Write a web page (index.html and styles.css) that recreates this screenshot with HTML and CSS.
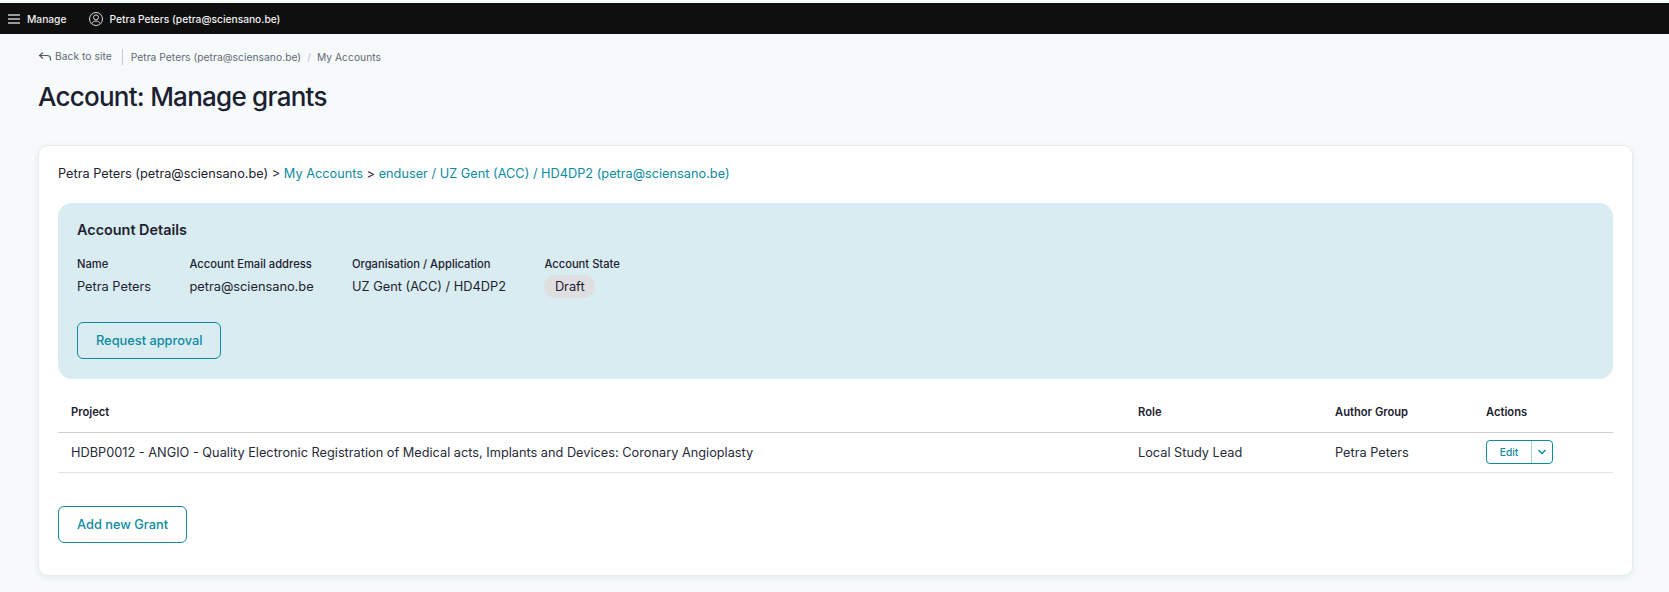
FILE: index.html
```html
<!DOCTYPE html>
<html lang="en">
<head>
<meta charset="utf-8">
<title>Account: Manage grants</title>
<link rel="stylesheet" href="styles.css">
</head>
<body>
<header class="topbar">
  <a class="topbar-manage">
    <svg class="icon-menu" width="14" height="12" viewBox="0 0 14 12"><path d="M1 2h12M1 6h12M1 10h12" stroke="#c9c9c9" stroke-width="1.3" fill="none"/></svg>
    <span>Manage</span>
  </a>
  <a class="topbar-user">
    <svg width="16" height="16" viewBox="0 0 16 16" fill="none" stroke="#d8d8d8" stroke-width="1"><circle cx="8" cy="8" r="6.5"/><circle cx="8" cy="6.4" r="2.5"/><path d="M3.6 12.8c.9-1.9 2.5-2.7 4.4-2.7s3.500.8 4.400 2.700"/></svg>
    <span>Petra Peters (petra@sciensano.be)</span>
  </a>
</header>
<main class="page">
  <nav class="crumbs">
    <a class="back">
      <svg width="14" height="12" viewBox="0 0 14 12" fill="none" stroke="#555b66" stroke-width="1.200"><path d="M5 1.500 1.500 4.500 5 7.500M1.500 4.500h7.500c2 0 3.500 1.300 3.500 3.500v1.500"/></svg>
      <span>Back to site</span>
    </a>
    <span class="crumb-trail">Petra Peters (petra@sciensano.be)<i>/</i>My Accounts</span>
  </nav>
  <h1>Account: Manage grants</h1>
  <section class="card">
    <p class="path">Petra Peters (petra@sciensano.be) &gt; <a>My Accounts</a> &gt; <a>enduser / UZ Gent (ACC) / HD4DP2 (petra@sciensano.be)</a></p>
    <div class="details">
      <h2>Account Details</h2>
      <div class="facts">
        <div><h3>Name</h3><p>Petra Peters</p></div>
        <div><h3>Account Email address</h3><p>petra@sciensano.be</p></div>
        <div><h3>Organisation / Application</h3><p>UZ Gent (ACC) / HD4DP2</p></div>
        <div><h3>Account State</h3><p><span class="pill">Draft</span></p></div>
      </div>
      <button class="btn">Request approval</button>
    </div>
    <table>
      <thead>
        <tr><th>Project</th><th>Role</th><th>Author Group</th><th>Actions</th></tr>
      </thead>
      <tbody>
        <tr>
          <td>HDBP0012 - ANGIO - Quality Electronic Registration of Medical acts, Implants and Devices: Coronary Angioplasty</td>
          <td>Local Study Lead</td>
          <td>Petra Peters</td>
          <td><span class="split"><span class="split-main">Edit</span><span class="split-caret"><svg width="10" height="6" viewBox="0 0 10 6" fill="none" stroke="#0e8ba0" stroke-width="1.500"><path d="M1.500 1 5 4.500 8.500 1"/></svg></span></span></td>
        </tr>
      </tbody>
    </table>
    <button class="btn btn-add">Add new Grant</button>
  </section>
</main>
</body>
</html>
```

FILE: styles.css
```css
* { box-sizing: border-box; }
html, body { margin: 0; height: 100%; }
body {
  background: #f6fafb;
  color: #1e2230;
  font-family: Inter, "Liberation Sans", sans-serif;
  font-size: 12.75px;
  overflow: hidden;
  padding-top: 3px;
}
.topbar {
  height: 31px;
  background: #0f0f0f;
  color: #f0f0f0;
  display: flex;
  align-items: center;
  font-size: 10.24px;
  font-weight: 500;
  padding-left: 7px;
}
.topbar a { display: flex; align-items: center; }
.topbar-manage { gap: 6px; }
.topbar-user { gap: 5px; margin-left: 22px; }
.page { padding: 0 36px 0 38px; }
.crumbs {
  display: flex;
  align-items: center;
  height: 16px;
  margin-top: 15px;
  font-size: 10.24px;
  color: #626875;
  letter-spacing: .05px;
}
.back { display: flex; align-items: center; gap: 3px; padding-right: 10px; border-right: 1px solid #c4c8cc; height: 16px; }
.back span { padding-bottom: 2px; }
.crumb-trail { padding-left: 8px; }
.crumb-trail i { font-style: normal; color: #c0c4c8; margin: 0 6px; }
h1 {
  margin: 14px 0 0;
  font-size: 26px;
  line-height: 36px;
  font-weight: 500;
  letter-spacing: -.75px;
  color: #1b2030;
}
.card {
  margin-top: 30px;
  height: 431px;
  background: #fff;
  border: 1px solid #e8ecee;
  border-radius: 10px;
  box-shadow: 0 2px 6px rgba(30, 50, 60, .08);
  padding: 0 19px;
}
.path { margin: 20px 0 0; font-size: 12.75px; line-height: 16px; color: #1e2230; }
.path a { color: #0e8ba0; }
.details {
  margin-top: 21px;
  height: 176px;
  background: #d8ecf1;
  border-radius: 14px;
  padding: 18px 19px 0;
}
h2 { margin: 0; font-size: 14.4px; line-height: 18px; font-weight: 600; }
.facts { display: flex; gap: 38.4px; margin-top: 18px; }
h3 { margin: 0; font-size: 11.2px; line-height: 14px; font-weight: 500; }
.facts p { margin: 4px 0 0; font-size: 12.8px; line-height: 23px; height: 23px; }
.pill { display: inline-block; padding: 0 10.5px; background: #dfdfe1; border-radius: 12px; }
.btn {
  display: block;
  font: 500 12.8px Inter, "Liberation Sans", sans-serif;
  color: #0e8ba0;
  background: transparent;
  border: 1px solid #0e8ba0;
  border-radius: 6px;
  height: 37px;
  padding: 0 18px;
}
.details .btn { margin-top: 24px; }
table { width: 100%; border-collapse: collapse; table-layout: fixed; margin-top: 14px; }
th {
  text-align: left;
  font-size: 11.2px;
  font-weight: 600;
  height: 39px;
  padding: 0 0 0 13px;
  border-bottom: 1px solid #cdcfd1;
}
th:nth-child(1) { width: 1067px; }
th:nth-child(2) { width: 197px; }
th:nth-child(3) { width: 151px; }
td {
  height: 40px;
  padding: 0 0 0 13px;
  font-size: 12.75px;
  border-bottom: 1px solid #e2e4e5;
  color: #272b3a;
}
.split {
  display: inline-flex;
  height: 24px;
  border: 1px solid #0e8ba0;
  border-radius: 4px;
  vertical-align: middle;
  font-size: 10.24px;
  font-weight: 500;
  color: #0e8ba0;
}
.split-main { width: 45px; display: flex; align-items: center; justify-content: center; border-right: 1px solid #a8d4dc; }
.split-caret { width: 20px; display: flex; align-items: center; justify-content: center; }
.btn-add { margin-top: 33px; }
```
